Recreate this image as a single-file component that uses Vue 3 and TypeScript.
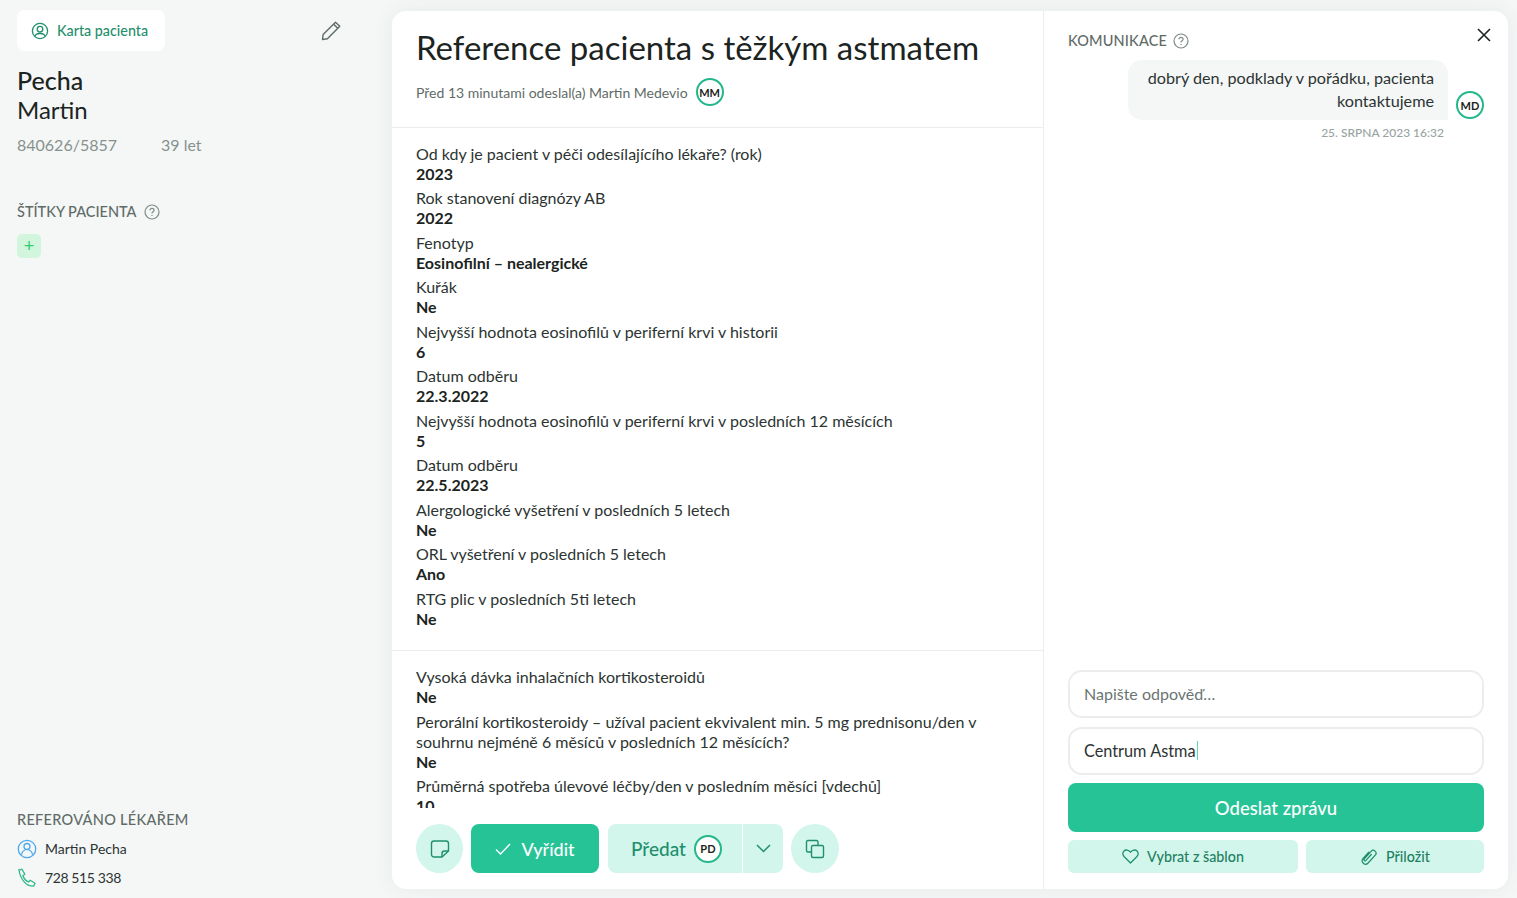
<script setup lang="ts">
interface Row { q: string; a: string }
const firstGroup: Row[] = [
  { q: 'Od kdy je pacient v péči odesílajícího lékaře? (rok)', a: '2023' },
  { q: 'Rok stanovení diagnózy AB', a: '2022' },
  { q: 'Fenotyp', a: 'Eosinofilní – nealergické' },
  { q: 'Kuřák', a: 'Ne' },
  { q: 'Nejvyšší hodnota eosinofilů v periferní krvi v historii', a: '6' },
  { q: 'Datum odběru', a: '22.3.2022' },
  { q: 'Nejvyšší hodnota eosinofilů v periferní krvi v posledních 12 měsících', a: '5' },
  { q: 'Datum odběru', a: '22.5.2023' },
  { q: 'Alergologické vyšetření v posledních 5 letech', a: 'Ne' },
  { q: 'ORL vyšetření v posledních 5 letech', a: 'Ano' },
  { q: 'RTG plic v posledních 5ti letech', a: 'Ne' },
]
const secondGroup: Row[] = [
  { q: 'Vysoká dávka inhalačních kortikosteroidů', a: 'Ne' },
  { q: 'Perorální kortikosteroidy – užíval pacient ekvivalent min. 5 mg prednisonu/den v souhrnu nejméně 6 měsíců v posledních 12 měsících?', a: 'Ne' },
  { q: 'Průměrná spotřeba úlevové léčby/den v posledním měsíci [vdechů]', a: '10' },
]
</script>

<template>
  <div class="page">
    <aside class="side">
      <div class="side-top">
        <div class="side-head">
          <button class="card-btn">
            <svg width="18" height="18" viewBox="0 0 18 18" fill="none" stroke="#1f8f6c" stroke-width="1.3"><circle cx="9" cy="9" r="7.6"/><circle cx="9" cy="7.2" r="2.8"/><path d="M3.9 14.4c.6-2 2.4-2.9 5.1-2.9s4.500 .9 5.100 2.900"/></svg>
            <span>Karta pacienta</span>
          </button>
          <svg class="pencil" width="22" height="22" viewBox="0 0 22 22" fill="none" stroke="#5f6b67" stroke-width="1.4" stroke-linejoin="round"><path d="M2.500 19.500l.6-5L15.500 2.200l4.300 4.100L7.400 18.800z"/><path d="M13.600 4.200l4.300 4.100"/></svg>
        </div>
        <div class="name">
          <div class="last">Pecha</div>
          <div class="first">Martin</div>
        </div>
        <div class="ident"><span>840626/5857</span><span>39 let</span></div>
        <div class="label tags-label">
          ŠTÍTKY PACIENTA
          <svg class="help" width="16" height="16" viewBox="0 0 16 16" fill="none" stroke="#7f8b87" stroke-width="1.200"><circle cx="8" cy="8" r="7"/><path d="M5.900 6.300c0-1.200 1-2 2.100-2s2.100 .8 2.100 1.900c0 1.600-2.100 1.600-2.100 3.200"/><path d="M8 11v.9"/></svg>
        </div>
        <button class="add">+</button>
      </div>
      <div class="side-bottom">
        <div class="label wide">REFEROVÁNO LÉKAŘEM</div>
        <div class="contact">
          <svg width="20" height="20" viewBox="0 0 20 20" fill="none" stroke="#4aa9ee" stroke-width="1.300"><circle cx="10" cy="10" r="8.700"/><circle cx="10" cy="7.500" r="3"/><path d="M4.500 15.800c.3-2.900 2-4.300 3.700-4.800M15.500 15.800c-.3-2.900-2-4.300-3.700-4.800"/></svg>
          <span>Martin Pecha</span>
        </div>
        <div class="contact">
          <svg width="20" height="20" viewBox="0 0 20 20" fill="none" stroke="#2fb98b" stroke-width="1.300" stroke-linejoin="round"><path d="M2 2.500l3-1.300 2.800 5-2 1.500c1 2.800 3 5 5.700 6.300l1.700-1.800 4.800 3-1.300 3c-7.500.3-13.700-7-14.700-16.700z"/></svg>
          <span class="phone">728 515 338</span>
        </div>
      </div>
    </aside>

    <main class="card">
      <section class="detail">
        <header class="detail-head">
          <h1>Reference pacienta s těžkým astmatem</h1>
          <div class="sender">
            <span>Před 13 minutami odeslal(a) Martin Medevio</span>
            <span class="avatar">MM</span>
          </div>
        </header>
        <div class="scroll">
          <div class="group">
            <div v-for="(r, i) in firstGroup" :key="i" class="row">
              <div>{{ r.q }}</div>
              <strong>{{ r.a }}</strong>
            </div>
          </div>
          <div class="group second">
            <div v-for="(r, i) in secondGroup" :key="i" class="row">
              <div>{{ r.q }}</div>
              <strong>{{ r.a }}</strong>
            </div>
          </div>
        </div>
        <footer class="actions">
          <button class="round note">
            <svg width="20" height="20" viewBox="0 0 20 20" fill="none" stroke="#1f8f6c" stroke-width="1.400" stroke-linejoin="round"><path d="M12 18H4a2.500 2.500 0 0 1-2.500-2.500V4.500A2.500 2.500 0 0 1 4 2h12a2.500 2.500 0 0 1 2.500 2.500V12z"/><path d="M12 18v-3.500a2.500 2.500 0 0 1 2.500-2.500h4"/></svg>
          </button>
          <button class="solve">
            <svg width="16" height="14" viewBox="0 0 16 14" fill="none" stroke="#fff" stroke-width="1.400"><path d="M1 7.500l4.500 4.500L15 2"/></svg>
            <span>Vyřídit</span>
          </button>
          <div class="split">
            <button class="pass">
              <span>Předat</span>
              <span class="avatar pd">PD</span>
            </button>
            <button class="chev">
              <svg width="15" height="9" viewBox="0 0 15 9" fill="none" stroke="#1f8f6c" stroke-width="1.500"><path d="M1 1l6.500 6.500L14 1"/></svg>
            </button>
          </div>
          <button class="round">
            <svg width="20" height="20" viewBox="0 0 20 20" fill="none" stroke="#1f8f6c" stroke-width="1.400" stroke-linejoin="round"><path d="M13 6V3a1.500 1.500 0 0 0-1.500-1.500H3A1.500 1.500 0 0 0 1.500 3v8.500A1.500 1.500 0 0 0 3 13h3"/><rect x="6.500" y="6.500" width="12" height="12" rx="1.500"/></svg>
          </button>
        </footer>
      </section>

      <section class="chat">
        <button class="close" aria-label="Zavřít">
          <svg width="14" height="14" viewBox="0 0 14 14" fill="none" stroke="#1c2422" stroke-width="1.600"><path d="M1 1l12 12M13 1L1 13"/></svg>
        </button>
        <div class="label chat-label">
          KOMUNIKACE
          <svg class="help" width="16" height="16" viewBox="0 0 16 16" fill="none" stroke="#7f8b87" stroke-width="1.200"><circle cx="8" cy="8" r="7"/><path d="M5.900 6.300c0-1.200 1-2 2.100-2s2.100 .8 2.100 1.900c0 1.600-2.100 1.600-2.100 3.200"/><path d="M8 11v.9"/></svg>
        </div>
        <div class="msg">
          <div class="bubble">dobrý den, podklady v pořádku, pacienta kontaktujeme</div>
          <span class="avatar">MD</span>
        </div>
        <div class="time">25. SRPNA 2023 16:32</div>
        <div class="spacer"></div>
        <div class="field placeholder">Napište odpověď…</div>
        <div class="field typed">Centrum Astma<i class="caret"></i></div>
        <button class="send">Odeslat zprávu</button>
        <div class="tools">
          <button class="tool tpl">
            <svg width="17" height="15" viewBox="0 0 17 15" fill="none" stroke="#1f8f6c" stroke-width="1.300" stroke-linejoin="round"><path d="M8.500 14L2 7.500C.4 5.800.5 3.300 2 1.900c1.600-1.400 4.500-1.200 6.500 1.300 2-2.500 4.900-2.700 6.500-1.300 1.500 1.400 1.600 3.900 0 5.600z"/></svg>
            <span>Vybrat z šablon</span>
          </button>
          <button class="tool att">
            <svg width="18" height="18" viewBox="0 0 16 16" fill="none" stroke="#1f8f6c" stroke-width="1.100" stroke-linecap="round"><g transform="rotate(42 8 8)"><path d="M5 5v7.500a3 3 0 0 0 6 0V3a2.500 2.500 0 0 0-5 0v9a1 1 0 0 0 2 0V5"/></g></svg>
            <span>Přiložit</span>
          </button>
        </div>
      </section>
    </main>
  </div>
</template>

<style>
html, body { margin: 0; background: #f5f7f7; }
</style>

<style scoped>
* { box-sizing: border-box; }
button { font-family: inherit; border: 0; cursor: pointer; padding: 0; }
.page {
  display: flex;
  height: 898px;
  overflow: hidden;
  background: #f5f7f7;
  font-family: Lato, "Noto Sans", sans-serif;
  color: #1c2422;
}
.side {
  width: 392px;
  flex: none;
  padding: 10px 17px 11px;
  display: flex;
  flex-direction: column;
  justify-content: space-between;
}
.side-head {
  display: flex;
  justify-content: space-between;
  align-items: center;
  padding-right: 33px;
}
.card-btn {
  width: 148px;
  height: 41px;
  border-radius: 8px;
  background: #fff;
  color: #1f8f6c;
  font-size: 14.300px;
  font-weight: 500;
  display: flex;
  align-items: center;
  gap: 8px;
  padding-left: 14px;
}
.name { margin-top: 15px; font-size: 25px; line-height: 29px; }
.last { font-weight: 500; }
.first { font-weight: 400; font-size: 24px; }
.ident {
  display: flex;
  gap: 44px;
  margin-top: 10px;
  color: #86918d;
  font-size: 16px;
  line-height: 22px;
}
.label {
  color: #5f6b67;
  font-size: 14.500px;
  font-weight: 500;
  line-height: 18px;
  display: flex;
  align-items: center;
  gap: 8px;
}
.label.wide { letter-spacing: .3px; }
.tags-label { margin-top: 47px; }
.add {
  display: block;
  margin-top: 13px;
  width: 24px;
  height: 24px;
  border-radius: 5px;
  background: #d2f5dd;
  color: #2ecf6f;
  font-size: 18px;
  line-height: 23px;
  font-family: "Liberation Sans", sans-serif;
}
.contact {
  display: flex;
  align-items: center;
  gap: 8px;
  height: 19px;
  font-size: 14px;
  color: #2c3432;
}
.side-bottom .contact + .contact { margin-top: 10px; }
.side-bottom .label + .contact { margin-top: 10px; }
.phone { letter-spacing: -.4px; }
.card {
  flex: 1;
  margin: 11px 9px 9px 0;
  background: #fff;
  border-radius: 14px;
  display: flex;
  min-width: 0;
  overflow: hidden;
  box-shadow: 0 0 22px rgba(60, 70, 70, .07);
}
.detail {
  width: 652px;
  flex: none;
  border-right: 1px solid #eceeee;
  display: flex;
  flex-direction: column;
  min-height: 0;
}
.detail-head {
  height: 117px;
  padding: 18px 24px 0;
  border-bottom: 1px solid #eceeee;
  flex: none;
}
h1 {
  margin: 0;
  font-size: 33px;
  font-weight: 400;
  line-height: 36px;
  color: #1c2422;
  white-space: nowrap;
}
.sender {
  display: flex;
  align-items: center;
  gap: 8px;
  margin-top: 13px;
  font-size: 14px;
  color: #5f6b67;
}
.avatar {
  width: 28px;
  height: 28px;
  border-radius: 50%;
  border: 2px solid #22b88c;
  background: #fff;
  color: #1c2422;
  font-size: 11px;
  font-weight: 700;
  display: inline-flex;
  align-items: center;
  justify-content: center;
  flex: none;
}
.scroll {
  height: 680px;
  flex: none;
  overflow: hidden;
  font-size: 16px;
  line-height: 20px;
}
.group {
  padding: 15.900px 24px 17.100px;
  border-bottom: 1px solid #eceeee;
}
.group.second { border-bottom: 0; }
.row { margin-bottom: 4.500px; color: #2c3432; }
.row strong { display: block; font-weight: 700; color: #1c2422; }
.actions {
  flex: 1;
  display: flex;
  gap: 8px;
  padding: 16px 24px 0;
}
.round {
  width: 48px;
  height: 49px;
  border-radius: 50%;
  background: #d2f6ec;
  display: flex;
  align-items: center;
  justify-content: center;
}
.round.note { width: 47px; }
.solve {
  width: 128px;
  height: 49px;
  border-radius: 8px;
  background: #26c397;
  color: #fff;
  font-size: 18px;
  font-weight: 500;
  display: flex;
  align-items: center;
  justify-content: center;
  gap: 10px;
}
.split {
  display: flex;
  gap: 1px;
  height: 49px;
  margin-left: 1px;
}
.pass {
  width: 134px;
  padding-left: 3px;
  background: #d2f6ec;
  border-radius: 8px 0 0 8px;
  color: #1f8f6c;
  font-size: 19px;
  font-weight: 500;
  display: flex;
  align-items: center;
  justify-content: center;
  gap: 8px;
}
.chev {
  width: 40px;
  background: #d2f6ec;
  border-radius: 0 8px 8px 0;
  display: flex;
  align-items: center;
  justify-content: center;
}
.chat {
  flex: 1;
  min-width: 0;
  position: relative;
  padding: 21px 24px 16px;
  display: flex;
  flex-direction: column;
}
.close {
  position: absolute;
  top: 17px;
  right: 17px;
  width: 14px;
  height: 14px;
  background: none;
  display: block;
}
.close svg { display: block; }
.chat-label { gap: 6px; letter-spacing: .15px; }
.msg {
  display: flex;
  justify-content: flex-end;
  align-items: flex-end;
  gap: 8px;
  margin-top: 10px;
}
.msg .avatar { margin-bottom: 1px; }
.bubble {
  width: 320px;
  padding: 6px 14px 8px;
  background: #f5f7f7;
  border-radius: 14px 14px 0 14px;
  text-align: right;
  font-size: 16.200px;
  line-height: 23px;
  color: #2c3432;
}
.time {
  margin-top: 5px;
  padding-right: 40px;
  text-align: right;
  font-size: 12px;
  line-height: 15px;
  font-weight: 500;
  color: #98a3a0;
}
.spacer { flex: 1; }
.field {
  height: 48px;
  border: 2px solid #eceeee;
  border-radius: 14px;
  padding: 0 14px 2px;
  font-size: 16px;
  display: flex;
  align-items: center;
}
.placeholder { color: #6a7572; }
.typed { margin-top: 9px; color: #2c3432; font-size: 16.300px; }
.caret {
  display: inline-block;
  width: 1.500px;
  height: 19px;
  background: #5fd8b5;
  margin-left: 1px;
}
.send {
  margin-top: 8px;
  height: 49px;
  flex: none;
  border-radius: 8px;
  background: #26c397;
  color: #fff;
  font-size: 18.500px;
  font-weight: 500;
}
.tools {
  display: flex;
  gap: 8px;
  margin-top: 8px;
}
.tool {
  height: 33px;
  border-radius: 6px;
  background: #d2f6ec;
  color: #1f7f62;
  font-size: 14.300px;
  font-weight: 500;
  display: flex;
  align-items: center;
  justify-content: center;
  gap: 8px;
}
.tpl { width: 230px; }
.att { flex: 1; }
</style>
